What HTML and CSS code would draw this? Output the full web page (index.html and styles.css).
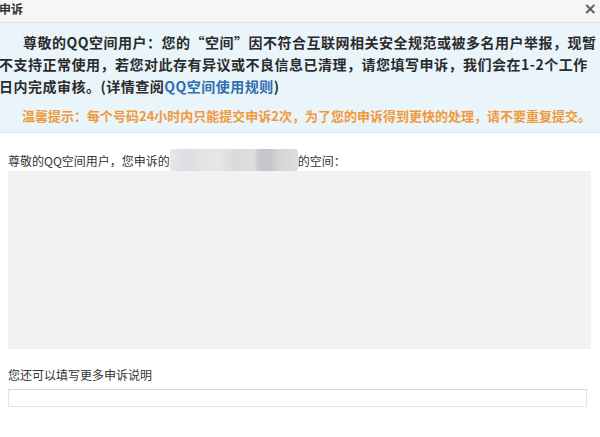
FILE: index.html
```html
<!DOCTYPE html>
<html lang="zh-CN">
<head>
<meta charset="utf-8">
<title>申诉</title>
<link rel="stylesheet" href="styles.css">
</head>
<body>
<div class="dialog">
  <div class="titlebar">
    <span class="title">申诉</span>
    <span class="close">×</span>
  </div>
  <div class="notice">
    <div class="notice-main">
      <span class="line first">尊敬的QQ空间用户：您的“空间”因不符合互联网相关安全规范或被多名用户举报，现暂</span>
      <span class="line">不支持正常使用，若您对此存有异议或不良信息已清理，请您填写申诉，我们会在1-2个工作</span>
      <span class="line">日内完成审核。(详情查阅<a class="rule-link" href="#">QQ空间使用规则</a>)</span>
    </div>
    <div class="notice-tip">温馨提示：每个号码24小时内只能提交申诉2次，为了您的申诉得到更快的处理，请不要重复提交。</div>
  </div>
  <div class="content">
    <div class="appeal-line">
      <span>尊敬的QQ空间用户，您申诉的</span><span class="blurred"></span><span>的空间：</span>
    </div>
    <div class="space-box"></div>
    <div class="more-label">您还可以填写更多申诉说明</div>
    <div class="more-input"></div>
  </div>
</div>
</body>
</html>
```

FILE: styles.css
```css
html, body {
  margin: 0;
  padding: 0;
  background: #ffffff;
  overflow: hidden;
}

body {
  font-family: "Noto Sans CJK SC", "Liberation Sans", sans-serif;
  color: #333333;
}

.dialog {
  width: 600px;
  height: 437px;
  background: #ffffff;
}

.titlebar {
  height: 23px;
  box-sizing: border-box;
  padding-top: 1px;
  background: #f6f6f6;
  border-bottom: 1px solid #dcdfe3;
  display: flex;
  align-items: flex-start;
  justify-content: space-between;
}

.title {
  font-size: 12px;
  font-weight: 700;
  color: #333333;
  line-height: 16px;
  margin-left: -1px;
}

.close {
  font-size: 16px;
  font-weight: 700;
  color: #5a5a5a;
  line-height: 16px;
  margin-right: 3px;
  font-family: "DejaVu Sans", sans-serif;
}

.notice {
  background: #eaf4fb;
  border-bottom: 1px solid #dbe8f1;
  height: 110px;
  box-sizing: border-box;
  padding-top: 8px;
}

.notice-main {
  font-size: 14px;
  font-weight: 700;
  line-height: 22px;
  letter-spacing: 0.5px;
  color: #2b2b2b;
  white-space: nowrap;
  overflow: hidden;
  padding-bottom: 1px;
  border-bottom: 1px solid #f2f8fc;
}

.notice-main .line {
  display: block;
  margin-left: -1px;
}

.notice-main .line.first {
  padding-left: 24px;
}

.rule-link {
  color: #2f6fae;
  text-decoration: none;
}

.notice-tip {
  margin-top: 6px;
  padding-left: 22px;
  font-size: 13px;
  font-weight: 700;
  line-height: 22px;
  color: #f09a3a;
  white-space: nowrap;
}

.content {
  padding: 16px 9px 0 8px;
}

.appeal-line {
  display: flex;
  align-items: center;
  height: 22px;
  font-size: 12px;
  color: #333333;
  white-space: nowrap;
}

.blurred {
  display: block;
  width: 128px;
  height: 22px;
  background: linear-gradient(90deg,
    #e6e6ea 0px, #d9d9de 14px, #dfdfe3 30px, #e4e4e8 48px,
    #d6d6da 66px, #dcdce0 84px, #c4c4c8 88px, #bebec3 100px,
    #d0d0d4 108px, #dadade 128px);
  border-radius: 3px;
  opacity: 0.9;
}

.space-box {
  height: 178px;
  background: #f2f2f2;
}

.more-label {
  margin-top: 18px;
  font-size: 12px;
  line-height: 16px;
  color: #333333;
}

.more-input {
  margin-top: 6px;
  width: 577px;
  height: 16px;
  border: 1px solid #e4e4e4;
  border-top-color: #d8d8d8;
  background: #ffffff;
}
```
